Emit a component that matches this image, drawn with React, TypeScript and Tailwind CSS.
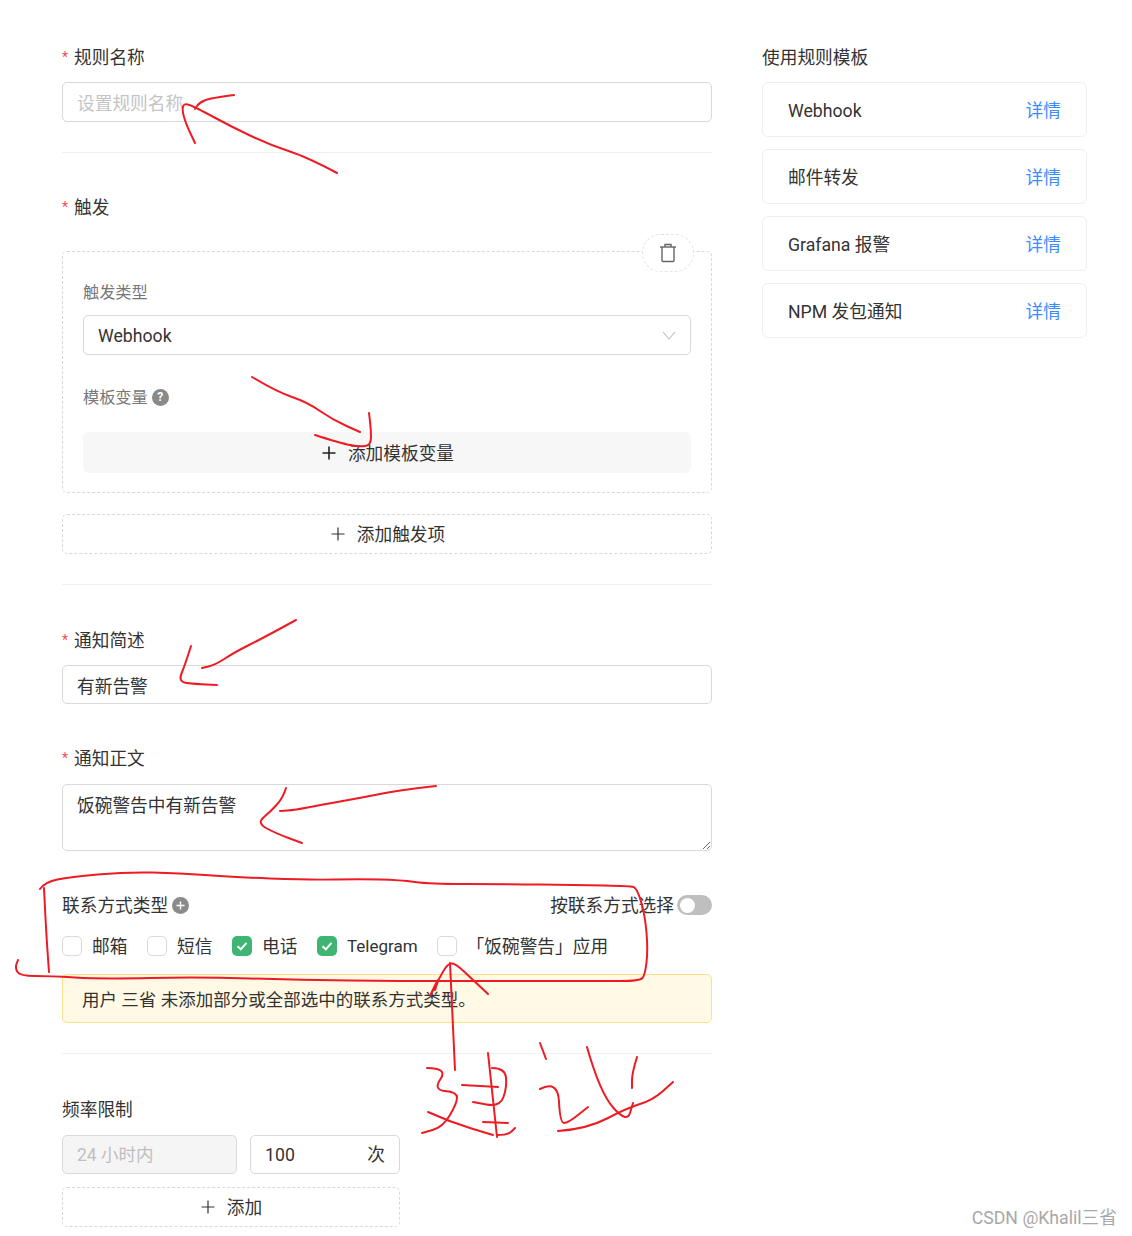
import React from "react";

const FONT = "font-['Roboto','Noto_Sans_CJK_SC',sans-serif]";

type P = [number, number];

function smooth(pts: P[]): string {
  if (pts.length < 3) return "M" + pts.map((p) => p.join(" ")).join("L");
  let d = `M${pts[0][0]} ${pts[0][1]}`;
  for (let i = 1; i < pts.length - 1; i++) {
    const mx = (pts[i][0] + pts[i + 1][0]) / 2;
    const my = (pts[i][1] + pts[i + 1][1]) / 2;
    d += ` Q${pts[i][0]} ${pts[i][1]} ${mx} ${my}`;
  }
  const l = pts[pts.length - 1];
  return d + ` L${l[0]} ${l[1]}`;
}

const strokes: P[][] = [
  [[337,173],[307,157],[270,145],[232,127],[195,107],[184,103],[182,110],[186,124],[195,143]],
  [[234,95],[210,98],[199,103],[195,109]],
  [[252,377],[277,392],[307,402],[333,420],[360,432]],
  [[315,435],[340,443],[360,447],[371,445],[371,430],[369,413]],
  [[296,620],[265,637],[235,652],[215,665],[202,668]],
  [[191,646],[185,665],[178,682],[195,684],[217,685]],
  [[436,786],[400,790],[360,798],[320,805],[295,810],[280,811]],
  [[286,788],[283,798],[270,812],[257,823],[275,833],[302,843]],
  [[40,889],[45,882],[70,877],[125,872],[180,873],[230,877],[310,880],[360,879],[400,880],[430,884],[500,884],[580,885],[630,886],[637,888],[645,915],[648,950],[645,975],[640,981],[600,981],[500,981],[400,981],[300,980],[200,977],[100,979],[50,976],[20,976],[15,968],[18,960]],
  [[44,888],[46,930],[49,972]],
  [[455,1070],[453,1027],[450,963]],
  [[488,994],[473,980],[455,963],[448,964],[442,973],[427,1002],[440,975],[435,990]],
  [[427,1068],[448,1068],[433,1090],[457,1092],[457,1103],[443,1127],[422,1133]],
  [[428,1112],[450,1122],[493,1135]],
  [[462,1085],[498,1087]],
  [[488,1053],[497,1137]],
  [[492,1068],[505,1068],[507,1087],[500,1107],[473,1102]],
  [[483,1122],[508,1123]],
  [[497,1135],[508,1135],[515,1128]],
  [[540,1043],[546,1059]],
  [[540,1089],[558,1080],[560,1123],[568,1123],[588,1107]],
  [[587,1047],[600,1093],[627,1123],[633,1103]],
  [[637,1057],[632,1073],[632,1088]],
  [[558,1131],[587,1129],[627,1108],[653,1100],[673,1082]],
];

function Label({ children, req, className = "" }: { children: React.ReactNode; req?: boolean; className?: string }) {
  return (
    <div className={`h-[26px] flex items-center text-[17.7px] leading-[26px] text-[#333] ${className}`}>
      {req && <span className="w-[12px] text-[14px] text-[#f5495d] leading-none">*</span>}
      <span className="pt-[2px]">{children}</span>
    </div>
  );
}

function Divider({ className = "" }: { className?: string }) {
  return <div className={`h-px bg-[#f0f0f0] ${className}`} />;
}

function PlusIcon({ dark }: { dark?: boolean }) {
  return (
    <svg width="14" height="14" viewBox="0 0 14 14" className="mr-[12px] shrink-0">
      <path d="M7 0.5V13.5M0.5 7H13.5" stroke={dark ? "#222" : "#333"} strokeWidth={dark ? 1.6 : 1.2} />
    </svg>
  );
}

function Check({ on, label, className = "", textClass = "text-[17.7px]" }: { on?: boolean; label: string; className?: string; textClass?: string }) {
  return (
    <div className={`flex items-center h-[26px] ${className}`}>
      {on ? (
        <span className="w-[20px] h-[20px] rounded-[5px] bg-[#3fb573] flex items-center justify-center">
          <svg width="14" height="14" viewBox="0 0 14 14">
            <path d="M2.5 7.2L5.8 10.3L11.5 3.9" fill="none" stroke="#fff" strokeWidth="2" />
          </svg>
        </span>
      ) : (
        <span className="w-[20px] h-[20px] rounded-[5px] bg-white border border-[#d9d9d9]" />
      )}
      <span className={`ml-[10px] pt-[2px] text-[#333] ${textClass}`}>{label}</span>
    </div>
  );
}

function Template({ name }: { name: string }) {
  return (
    <div className="h-[55px] rounded-[6px] border border-[#efefef] pl-[25px] pr-[24px] pt-[3px] flex items-center justify-between text-[17.7px]">
      <span className="text-[#333]">{name}</span>
      <span className="text-[#3b8cff] pr-[1px]">详情</span>
    </div>
  );
}

const inputCls =
  "block w-full border border-[#d9d9d9] rounded-[5px] px-[14px] text-[17.7px] text-[#333] outline-none placeholder:text-[#c4c4c4] bg-white";

export default function App() {
  return (
    <div className={`${FONT} relative w-[1132px] h-[1236px] bg-white overflow-hidden flex pl-[62px] pt-[44px] gap-[50px]`}>
      <div className="w-[650px]">
        <Label req>规则名称</Label>
        <input readOnly placeholder="设置规则名称" className={`${inputCls} h-[40px] mt-[12px] pt-[4px]`} />
        <Divider className="mt-[30px]" />

        <Label req className="mt-[41px]">触发</Label>
        <div className="relative mt-[31px] border border-dashed border-[#d9d9d9] rounded-[5px] px-[20px] pt-[27px] pb-[19px]">
          <div className="absolute right-[17px] top-[-18px] w-[52px] h-[38px] rounded-full border border-dashed border-[#e3e3e3] bg-white flex items-center justify-center">
            <svg width="18" height="20" viewBox="0 0 18 20" fill="none" stroke="#666" strokeWidth="1.4">
              <path d="M1 4H17" />
              <path d="M6 4V1.5H12V4" />
              <path d="M3 4V17.5Q3 18.5 4 18.5H14Q15 18.5 15 17.5V4" />
            </svg>
          </div>
          <div className="h-[26px] pt-[2px] flex items-center text-[16.2px] text-[#777]">触发类型</div>
          <div className="mt-[10px] h-[40px] border border-[#d9d9d9] rounded-[5px] pl-[14px] pr-[14px] flex items-center justify-between text-[17.7px] text-[#333]">
            <span className="pt-[2px]">Webhook</span>
            <svg width="14" height="9" viewBox="0 0 14 9" fill="none" stroke="#bfbfbf" strokeWidth="1.1">
              <path d="M1 1L7 8L13 1" />
            </svg>
          </div>
          <div className="mt-[29px] h-[26px] flex items-center text-[16.2px] text-[#777]">
            <span className="pt-[2px]">模板变量</span>
            <span className="ml-[4px] w-[17px] h-[17px] rounded-full bg-[#8a8a8a] text-white text-[12px] font-bold leading-none flex items-center justify-center">?</span>
          </div>
          <div className="mt-[22px] h-[41px] rounded-[6px] bg-[#f7f7f7] pl-[2px] flex items-center justify-center text-[17.7px] text-[#333]">
            <PlusIcon dark /><span className="pt-[3px]">添加模板变量</span>
          </div>
        </div>

        <div className="mt-[21px] h-[40px] border border-dashed border-[#d9d9d9] rounded-[5px] pl-[2px] flex items-center justify-center text-[17.7px] text-[#333]">
          <PlusIcon /><span className="pt-[2px]">添加触发项</span>
        </div>
        <Divider className="mt-[30px]" />

        <Label req className="mt-[42px]">通知简述</Label>
        <input readOnly value="有新告警" className={`${inputCls} h-[39px] mt-[12px]`} />

        <Label req className="mt-[41px]">通知正文</Label>
        <textarea
          readOnly
          value="饭碗警告中有新告警"
          className={`${inputCls} h-[67px] mt-[13px] pt-[8px] leading-[26px]`}
        />

        <div className="mt-[41px] h-[26px] flex items-center justify-between">
          <div className="flex items-center text-[17.7px] text-[#333]">
            <span className="pt-[2px]">联系方式类型</span>
            <span className="ml-[4px] w-[17px] h-[17px] rounded-full bg-[#8a8a8a] flex items-center justify-center">
              <svg width="9" height="9" viewBox="0 0 9 9"><path d="M4.5 0.5V8.5M0.5 4.5H8.5" stroke="#fff" strokeWidth="1.4" /></svg>
            </span>
          </div>
          <div className="flex items-center text-[17.7px] text-[#333]">
            <span className="pt-[2px]">按联系方式选择</span>
            <span className="ml-[3px] w-[35px] h-[20px] rounded-full bg-[#bfbfbf] flex items-center pl-[3px]">
              <span className="w-[15px] h-[15px] rounded-full bg-white" />
            </span>
          </div>
        </div>

        <div className="mt-[15px] flex items-center">
          <Check label="邮箱" className="mr-[19.6px]" />
          <Check label="短信" className="mr-[19.6px]" />
          <Check on label="电话" className="mr-[19.6px]" />
          <Check on label="Telegram" className="mr-[19px]" textClass="text-[17px]" />
          <Check label="「饭碗警告」应用" />
        </div>

        <div className="mt-[15px] h-[49px] rounded-[5px] border border-[#ffe08a] bg-[#fff9e6] pl-[19px] pt-[3px] flex items-center text-[17.5px] text-[#333]">
          用户 三省 未添加部分或全部选中的联系方式类型。
        </div>
        <Divider className="mt-[30px]" />

        <div className="mt-[42px] h-[26px] pt-[2px] flex items-center text-[17.7px] text-[#333]">频率限制</div>
        <div className="mt-[13px] w-[338px] flex gap-[13px]">
          <div className="w-[175px] h-[39px] rounded-[5px] border border-[#d9d9d9] bg-[#f5f5f5] pl-[14px] pt-[2px] flex items-center text-[17.5px] text-[#bfbfbf]">24 小时内</div>
          <div className="w-[150px] h-[39px] rounded-[5px] border border-[#d9d9d9] px-[14px] pt-[2px] flex items-center justify-between text-[17.7px] text-[#333]">
            <span>100</span><span>次</span>
          </div>
        </div>
        <div className="mt-[13px] w-[338px] h-[40px] border border-dashed border-[#d9d9d9] rounded-[5px] pl-[1px] flex items-center justify-center text-[17.7px] text-[#333]">
          <PlusIcon /><span className="pt-[2px]">添加</span>
        </div>
      </div>

      <div className="w-[325px]">
        <Label>使用规则模板</Label>
        <div className="mt-[12px] flex flex-col gap-[12px]">
          <Template name="Webhook" />
          <Template name="邮件转发" />
          <Template name="Grafana 报警" />
          <Template name="NPM 发包通知" />
        </div>
      </div>

      <svg className="absolute left-0 top-0 pointer-events-none" width="1132" height="1236" fill="none" stroke="#ed1c24" strokeWidth="2" strokeLinecap="round" strokeLinejoin="round">
        {strokes.map((s, i) => (
          <path key={i} d={smooth(s)} />
        ))}
      </svg>

      <div className="absolute right-[15px] top-[1206px] text-[17.7px] leading-[24px] text-[#a8a8a8]">CSDN @Khalil三省</div>
    </div>
  );
}
